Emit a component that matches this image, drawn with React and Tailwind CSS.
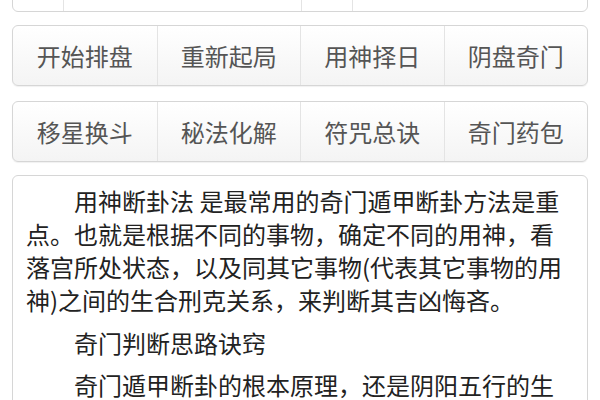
import React from 'react';

const rows = [
    ['开始排盘', '重新起局', '用神择日', '阴盘奇门'],
    ['移星换斗', '秘法化解', '符咒总诀', '奇门药包'],
];

function ButtonRow({ items, className }) {
    return (
        <div className={`grid grid-cols-4 h-[61px] rounded-[6px] border border-[#d6d6d6] bg-gradient-to-b from-white to-[#f4f4f4] shadow-[0_1px_1px_rgba(0,0,0,0.06)] overflow-hidden ${className}`}>
            {items.map((label, i) => (
                <div
                    key={label}
                    className={`flex items-center justify-center text-[24px] text-[#555] ${i > 0 ? 'border-l border-[#e4e4e4]' : ''}`}
                >
                    {label}
                </div>
            ))}
        </div>
    );
}

export default function App() {
    return (
        <div
            className="w-[600px] h-[400px] overflow-hidden bg-white"
            style={{ fontFamily: '"Noto Sans CJK SC", "Noto Sans", sans-serif' }}
        >
            <div className="-mt-[48px] px-[12px]">
                {/* top form strip, scrolled mostly out of view */}
                <div className="grid grid-cols-[50px_238px_51px_1fr] h-[60px] rounded-b-[6px] border border-[#d6d6d6] bg-white">
                    <div />
                    <div className="border-l border-[#e4e4e4]" />
                    <div className="border-l border-[#e4e4e4]" />
                    <div className="border-l border-[#e4e4e4]" />
                </div>

                <ButtonRow items={rows[0]} className="mt-[13px]" />
                <ButtonRow items={rows[1]} className="mt-[15px]" />

                <div className="mt-[13px] h-[300px] rounded-t-[6px] border border-[#d6d6d6] bg-white pl-[13px] pr-[17px] pt-[8px] text-[24px] leading-[33px] text-[#222]">
                    <p className="indent-[48px]">
                        用神断卦法 是最常用的奇门遁甲断卦方法是重点。也就是根据不同的事物，确定不同的用神，看落宫所处状态，以及同其它事物(代表其它事物的用神)之间的生合刑克关系，来判断其吉凶悔吝。
                    </p>
                    <p className="indent-[48px] mt-[10px]">奇门判断思路诀窍</p>
                    <p className="indent-[48px] mt-[9px]">
                        奇门遁甲断卦的根本原理，还是阴阳五行的生克制化关系，以及旺相休囚的状态。
                    </p>
                </div>
            </div>
        </div>
    );
}
